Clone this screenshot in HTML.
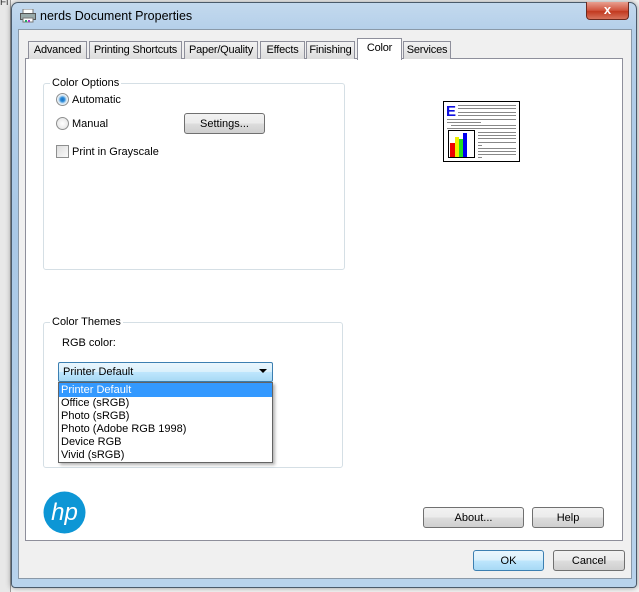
<!DOCTYPE html>
<html><head><style>
*{box-sizing:border-box;margin:0;padding:0}
body{width:639px;height:592px;overflow:hidden;background:#f4f4f4;font-family:"Liberation Sans",sans-serif;font-size:11px;color:#000;position:relative}
.abs{position:absolute}
.win{left:11px;top:2px;width:626px;height:586px;border:1px solid #4a5a6a;border-radius:7px 7px 4px 4px;background:linear-gradient(180deg,#c3d9ee 0,#b4cfe9 28px,#a9c8e6 40%,#b8d3ec 100%);box-shadow:0 0 6px rgba(0,0,0,.4)}
.client{left:18px;top:29px;width:614px;height:550px;background:#f0f0f0;border:1px solid #8a99a8}
.panel{left:25px;top:58px;width:598px;height:483px;background:#fff;border:1px solid #8e8f9b}
.tab{top:41px;height:18px;border:1px solid #8e8f9b;border-bottom:none;background:linear-gradient(#f2f2f2,#dcdcdc);font-size:11px;letter-spacing:-0.2px;text-align:center;line-height:17px;white-space:nowrap;overflow:hidden}
.tab.sel{top:38px;height:22px;background:#fff;z-index:2;line-height:18px}
.grp{border:1px solid #d5dfe5;border-radius:3px}
.lg{background:#fff;padding:0 2px;font-size:11px}
.btn{border:1px solid #707070;border-radius:3px;background:linear-gradient(#f2f2f2 0,#ebebeb 50%,#dddddd 51%,#cfcfcf 100%);text-align:center;font-size:11px}
.t{font-size:11px}
.radio{width:13px;height:13px;border-radius:50%;border:1px solid #8e8f8f;background:radial-gradient(#fff,#e0e0e0)}
</style></head><body>
<div class="abs" style="left:0;top:0;width:11px;height:592px;background:#e8e8e8;border-right:1px solid #999"></div>
<div class="abs" style="left:0;top:0;width:30px;height:8px;font-size:10px;color:#333;line-height:6px">Fi</div>
<div class="abs win"></div>
<svg class="abs" style="left:20px;top:9px" width="16" height="14"><rect x="3" y="0" width="10" height="5" fill="#fff" stroke="#777"/><rect x="0.5" y="4.5" width="15" height="6" fill="#9aa" stroke="#555"/><rect x="3" y="9" width="10" height="4" fill="#fff" stroke="#777"/><rect x="5" y="11" width="2" height="2" fill="#2a6"/><rect x="8" y="11" width="2" height="2" fill="#a3c"/></svg>
<div class="abs" style="left:40px;top:9px;font-size:12.5px;color:#000">nerds Document Properties</div>
<div class="abs" style="left:586px;top:2px;width:43px;height:18px;border:1px solid #6b2a1f;border-top:none;border-radius:0 0 4px 4px;background:linear-gradient(#e8a090,#d0533c 50%,#c2391f 55%,#d7735c);color:#fff;font-weight:bold;text-align:center;font-size:13px;line-height:16px">x</div>
<div class="abs client"></div>
<div class="abs panel"></div>
<div class="abs tab" style="left:28px;width:59px">Advanced</div>
<div class="abs tab" style="left:89px;width:93px">Printing Shortcuts</div>
<div class="abs tab" style="left:184px;width:74px">Paper/Quality</div>
<div class="abs tab" style="left:260px;width:45px">Effects</div>
<div class="abs tab" style="left:306px;width:49px">Finishing</div>
<div class="abs tab sel" style="left:357px;width:45px">Color</div>
<div class="abs tab" style="left:403px;width:48px">Services</div>

<div class="abs grp" style="left:43px;top:83px;width:302px;height:187px"></div>
<div class="abs lg" style="left:50px;top:77px">Color Options</div>
<div class="abs radio" style="left:56px;top:93px;background:radial-gradient(#1b6fbf 0,#2a8ad8 2px,#cfe3f2 4px,#fff 6px)"></div>
<div class="abs t" style="left:72px;top:94px">Automatic</div>
<div class="abs radio" style="left:56px;top:117px"></div>
<div class="abs t" style="left:72px;top:118px">Manual</div>
<div class="abs btn" style="left:184px;top:113px;width:81px;height:21px;line-height:20px">Settings...</div>
<div class="abs" style="left:56px;top:145px;width:13px;height:13px;border:1px solid #8e8f8f;background:linear-gradient(135deg,#ddd,#fafafa)"></div>
<div class="abs t" style="left:72px;top:146px">Print in Grayscale</div>

<svg class="abs" style="left:443px;top:101px" width="77" height="61">
<rect x="0.5" y="0.5" width="76" height="60" fill="#fff" stroke="#000"/>
<text x="3" y="15" font-family="Liberation Sans" font-weight="bold" font-size="15" fill="#1010e0">E</text>
<g fill="#888"><rect x="15" y="4" width="58" height="1"/><rect x="15" y="7" width="58" height="1"/><rect x="15" y="11" width="58" height="1"/><rect x="15" y="14" width="58" height="1"/><rect x="4" y="18" width="69" height="1"/><rect x="4" y="21" width="34" height="1"/><rect x="8" y="24" width="65" height="1"/><rect x="4" y="27" width="69" height="1"/>
<rect x="35" y="31" width="38" height="1"/><rect x="35" y="34" width="38" height="1"/><rect x="35" y="37" width="38" height="1"/><rect x="35" y="41" width="38" height="1"/><rect x="35" y="44" width="4" height="1"/><rect x="35" y="47" width="38" height="1"/><rect x="35" y="50" width="38" height="1"/><rect x="35" y="53" width="38" height="1"/><rect x="35" y="56" width="4" height="1"/></g>
<rect x="5.5" y="29.5" width="26" height="27" fill="#fff" stroke="#000"/>
<rect x="7" y="42" width="5" height="14" fill="#e00"/><rect x="12" y="36" width="4" height="20" fill="#ee0"/><rect x="16" y="38" width="4" height="18" fill="#2d2"/><rect x="20" y="32" width="4" height="24" fill="#00e"/>
</svg>

<div class="abs grp" style="left:43px;top:322px;width:300px;height:146px"></div>
<div class="abs lg" style="left:50px;top:316px">Color Themes</div>
<div class="abs t" style="left:62px;top:337px">RGB color:</div>
<div class="abs" style="left:58px;top:362px;width:215px;height:20px;border:1px solid #3c7fb1;border-radius:2px;background:linear-gradient(#eaf6fd,#d9f0fc 50%,#bee6fd 51%,#a7d9f5);font-size:11px;line-height:19px;padding-left:4px">Printer Default</div>
<svg class="abs" style="left:259px;top:369px" width="9" height="5"><path d="M0 0h8L4 4z" fill="#000"/></svg>
<div class="abs" style="left:58px;top:382px;width:215px;height:81px;border:1px solid #646464;background:#fff;box-shadow:2px 2px 3px rgba(0,0,0,.3);font-size:11px;line-height:13px">
<div style="background:#3399ff;color:#fff;padding-left:2px;line-height:14px">Printer Default</div>
<div style="padding-left:2px">Office (sRGB)</div>
<div style="padding-left:2px">Photo (sRGB)</div>
<div style="padding-left:2px">Photo (Adobe RGB 1998)</div>
<div style="padding-left:2px">Device RGB</div>
<div style="padding-left:2px">Vivid (sRGB)</div>
</div>

<svg class="abs" style="left:43px;top:491px" width="43" height="43"><circle cx="21.5" cy="21.5" r="21" fill="#0d96d5"/><text x="21.5" y="29" text-anchor="middle" font-family="Liberation Sans" font-style="italic" font-size="24" fill="#fff">hp</text></svg>
<div class="abs btn" style="left:423px;top:507px;width:101px;height:21px;line-height:20px">About...</div>
<div class="abs btn" style="left:532px;top:507px;width:72px;height:21px;line-height:20px">Help</div>
<div class="abs btn" style="left:473px;top:550px;width:71px;height:21px;line-height:20px;border-color:#3c7fb1;background:linear-gradient(#eaf6fd,#d9f0fc 50%,#bee6fd 51%,#a7d9f5)">OK</div>
<div class="abs btn" style="left:553px;top:550px;width:72px;height:21px;line-height:20px">Cancel</div>
</body></html>
